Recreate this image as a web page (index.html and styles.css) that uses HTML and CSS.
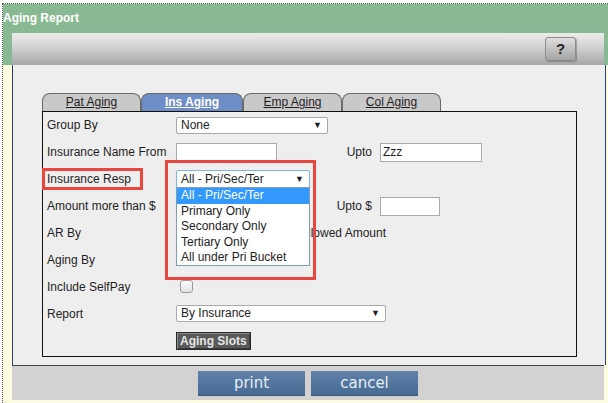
FILE: index.html
```html
<!DOCTYPE html>
<html lang="en">
<head>
    <meta charset="UTF-8">
    <title>Aging Report</title>
    <link rel="stylesheet" href="styles.css">
</head>
<body>
    <div class="window">
        <div class="head">
            <div class="title">Aging Report</div>
            <div class="toolbar">
                <button class="help">?</button>
            </div>
        </div>

        <div class="panel">
            <div class="tabs">
                <a class="tab">Pat Aging</a>
                <a class="tab active">Ins Aging</a>
                <a class="tab">Emp Aging</a>
                <a class="tab">Col Aging</a>
            </div>

            <div class="tabbox">
                <div class="form">
                    <div class="label">Group By</div>
                    <div class="ctl"><div class="select w-group">None<span class="arrow">▼</span></div></div>
                    <div></div><div></div>

                    <div class="label">Insurance Name From</div>
                    <div class="ctl"><div class="input w-name"></div></div>
                    <div class="label2">Upto</div>
                    <div class="ctl"><div class="input w-upto">Zzz</div></div>

                    <div class="label">Insurance Resp</div>
                    <div class="ctl"><div class="select focus w-resp">All - Pri/Sec/Ter<span class="arrow">▼</span></div></div>
                    <div></div><div></div>

                    <div class="label">Amount more than $</div>
                    <div class="ctl"></div>
                    <div class="label2">Upto $</div>
                    <div class="ctl"><div class="input w-amt"></div></div>

                    <div class="label">AR By</div>
                    <div class="ctl span">
                        <span class="opt">Allowed Amount</span>
                    </div>

                    <div class="label">Aging By</div>
                    <div class="ctl span"></div>

                    <div class="label">Include SelfPay</div>
                    <div class="ctl"><span class="check"></span></div>
                    <div></div><div></div>

                    <div class="label">Report</div>
                    <div class="ctl span"><div class="select w-report">By Insurance<span class="arrow">▼</span></div></div>
                </div>

                <div class="slots-row">
                    <button class="slots">Aging Slots</button>
                </div>

                <!-- open list of the Insurance Resp select -->
                <div class="dropdown">
                    <div class="item selected">All - Pri/Sec/Ter</div>
                    <div class="item">Primary Only</div>
                    <div class="item">Secondary Only</div>
                    <div class="item">Tertiary Only</div>
                    <div class="item">All under Pri Bucket</div>
                </div>

                <!-- red highlight marks -->
                <div class="mark mark-label"></div>
                <div class="mark mark-select"></div>
            </div>
        </div>

        <div class="footer">
            <button class="btn">print</button>
            <button class="btn">cancel</button>
        </div>
    </div>
</body>
</html>
```

FILE: styles.css
```css
* {
    margin: 0;
    padding: 0;
    box-sizing: border-box;
}

body {
    font-family: 'Liberation Sans', Arial, sans-serif;
    font-size: 12px;
    color: #1e1e1e;
    background: white;
    width: 608px;
    height: 403px;
    overflow: hidden;
}

.window {
    margin: 3px 0 0 2px;
    border-top: 1px dotted #555;
    border-left: 1px dotted #555;
    background: #fdfde3;
    height: 400px;
}

.head {
    background: #89b992;
}

.title {
    height: 29px;
    line-height: 28px;
    color: white;
    font-weight: bold;
    font-size: 12px;
}

.toolbar {
    margin: 0 4px 0 9px;
    height: 32px;
    background: linear-gradient(#ebebeb, #d8d8d8 35%, #a7a7a7);
    display: flex;
    justify-content: flex-end;
    align-items: center;
    padding-right: 28px;
}

.help {
    width: 31px;
    height: 24px;
    margin-top: -1px;
    border: 1px solid #8c8c8c;
    border-radius: 3px;
    background: linear-gradient(#dedede, #a4a4a4);
    box-shadow: 1px 1px 1px rgba(0, 0, 0, 0.25);
    font-family: 'Liberation Sans', Arial, sans-serif;
    font-weight: bold;
    font-size: 15px;
    color: #222;
}

.panel {
    margin: 0 2px 0 9px;
    background: #eeeeee;
    border-left: 1px solid #2b3f6b;
    border-right: 1px solid #2b3f6b;
    padding: 28px 0 8px 29px;
}

.tabs {
    display: flex;
    height: 18px;
}

.tab {
    width: 99px;
    height: 18px;
    border: 1px solid #6b6b6b;
    border-bottom: none;
    border-radius: 8px 8px 0 0;
    background: #c9c9c9;
    text-align: center;
    line-height: 17px;
    text-decoration: underline;
    color: #1e1e1e;
}

.tab.active {
    width: 102px;
    background: #6f8ec8;
    color: white;
    font-weight: bold;
}

.tabbox {
    position: relative;
    width: 535px;
    border: 1px solid #111;
    padding: 0 0 6px 4px;
}

.form {
    display: grid;
    grid-template-columns: 129px 160px 44px 1fr;
    grid-auto-rows: 26.9px;
    align-items: center;
}

.label2 {
    text-align: right;
    padding-right: 8px;
}

.ctl {
    display: flex;
    align-items: center;
}

.ctl.span {
    grid-column: 2 / -1;
}

.select {
    position: relative;
    height: 17px;
    line-height: 15px;
    background: white;
    border: 1px solid #a9a9a9;
    border-radius: 2px;
    padding-left: 4px;
}

.select.focus {
    height: 19px;
    line-height: 17px;
    border-color: #7eb4ea;
}

.arrow {
    position: absolute;
    right: 5px;
    top: 0;
    font-size: 9px;
}

.w-group { width: 152px; }
.w-resp { width: 134px; }
.w-report { width: 210px; }

.input {
    height: 19px;
    background: white;
    border: 1px solid #a9a9a9;
    line-height: 17px;
    padding-left: 2px;
}

.w-name { width: 101px; }
.w-upto { width: 102px; }
.w-amt { width: 60px; }

.opt {
    padding-left: 124px;
}

.check {
    width: 13px;
    height: 13px;
    margin-left: 4px;
    border: 1px solid #9a9a9a;
    border-radius: 3px;
    background: linear-gradient(#fdfdfd, #e2e2e2);
}

.slots-row {
    padding: 5px 0 0 129px;
}

.slots {
    height: 18px;
    padding: 0 3px;
    background: #5a5a5a;
    border: 1px solid #2a2a2a;
    box-shadow: inset 1px 1px 0 #8a8a8a, inset -1px -1px 0 #3a3a3a;
    color: #e4e4e4;
    font-family: 'Liberation Sans', Arial, sans-serif;
    font-weight: bold;
    font-size: 12px;
}

.dropdown {
    position: absolute;
    left: 133px;
    top: 75px;
    width: 134px;
    height: 79px;
    background: white;
    border: 1px solid #7f9db9;
    z-index: 2;
}

.item {
    height: 15.5px;
    line-height: 15.5px;
    padding-left: 4px;
}

.item.selected {
    background: #3399ff;
    color: white;
}

.mark {
    position: absolute;
    border: 3px solid #e8463f;
    z-index: 3;
}

.mark-label {
    left: -1px;
    top: 56px;
    width: 101px;
    height: 22px;
}

.mark-select {
    left: 122px;
    top: 48px;
    width: 151px;
    height: 120px;
}

.footer {
    margin: 0 4px 0 9px;
    height: 35px;
    background: #d2d2d2;
    border-top: 1px solid #444;
    display: flex;
    justify-content: center;
    align-items: center;
    gap: 6px;
}

.btn {
    width: 107px;
    height: 25px;
    border: none;
    background: linear-gradient(#5f81aa, #476a92);
    box-shadow: inset 0 -1px 0 #3b5878;
    color: #e9eef5;
    font-family: 'DejaVu Sans', sans-serif;
    font-size: 15px;
    line-height: 23px;
}
```
